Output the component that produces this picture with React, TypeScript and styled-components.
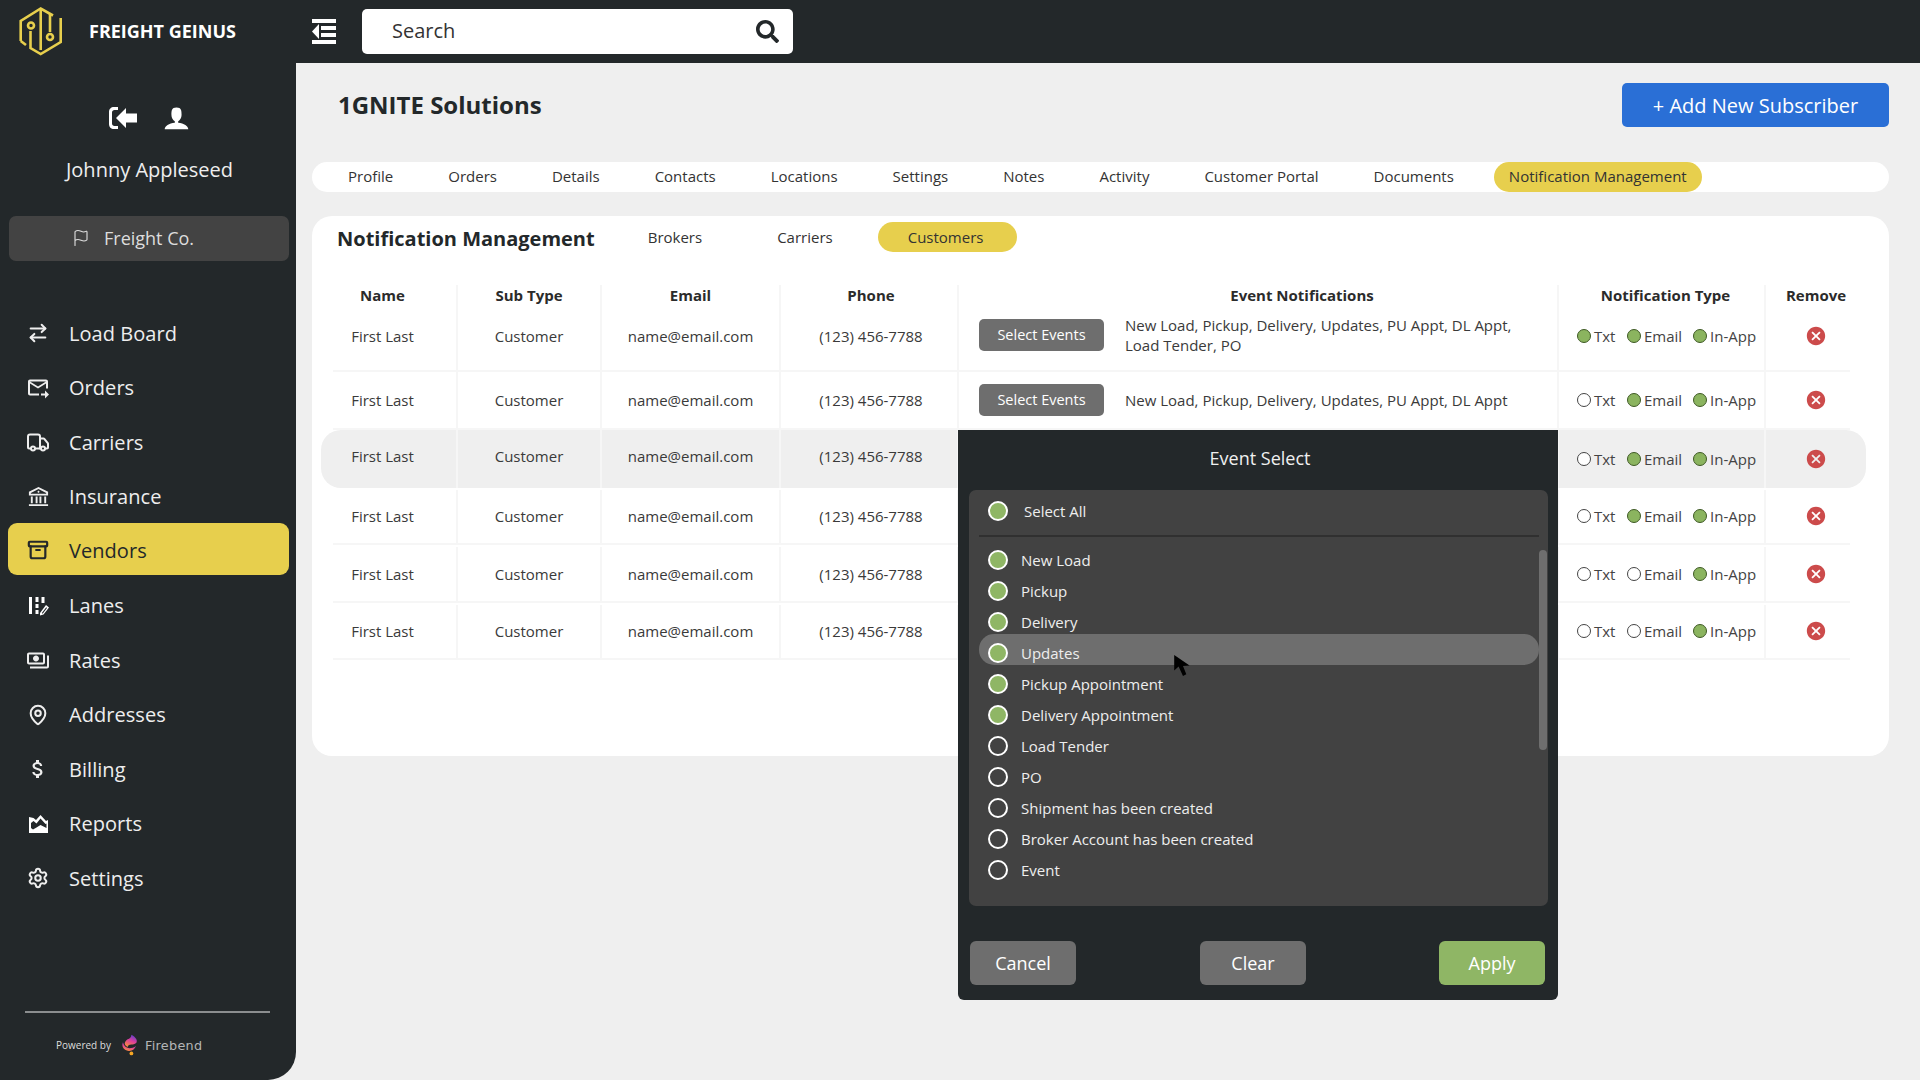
import React from 'react'
import styled, { createGlobalStyle } from 'styled-components'
import { ArrowRightLeft, Archive, Flag, MapPin, Settings } from 'lucide-react'
import { MdOutlineForwardToInbox, MdOutlinePayments, MdCancel, MdAttachMoney } from 'react-icons/md'
import { LuTruck } from 'react-icons/lu'
import { RiBankLine } from 'react-icons/ri'
import { FaSearch } from 'react-icons/fa'
import { ImUser } from 'react-icons/im'

const Global = createGlobalStyle`
  html, body { margin: 0; padding: 0; height: 100%; }
  body { font-family: "Open Sans", "Liberation Sans", sans-serif; background: #efefef; color: #333; }
  * { box-sizing: border-box; }
  #root { width: 1920px; height: 1080px; overflow: hidden; }
`

const Logo = () => (
  <svg width="46" height="52" viewBox="8 6 46 52" fill="none" stroke="#e7cf4d" strokeWidth="2.6" strokeLinejoin="miter">
    <path d="M10.7 41 V21 L30.7 8.5 L43 15.5" />
    <path d="M50.7 18 V42 L30.7 54 L20.5 48 V31" />
    <path d="M10.7 41 L16 45" />
    <path d="M30.7 8.5 V50" />
    <path d="M40 14 V32" />
    <circle cx="21" cy="25.5" r="3" />
    <circle cx="40" cy="37" r="3" />
  </svg>
)

const MenuIcon = () => (
  <svg width="24" height="25" viewBox="0 0 24 25" fill="#fff">
    <rect x="0" y="0" width="24" height="4" />
    <rect x="0" y="21" width="24" height="4" />
    <rect x="9" y="7" width="15" height="4" />
    <rect x="9" y="14" width="15" height="4" />
    <path d="M7 5 L0 12.5 L7 20 Z" />
  </svg>
)

const SignOutIcon = () => (
  <svg width="29" height="24" viewBox="0 0 29 24" fill="#fff">
    <path d="M9 1 H5 C2 1 0 3 0 6 V18 C0 21 2 23 5 23 H9 V20 H5.500 C4 20 3 19 3 17.500 V6.500 C3 5 4 4 5.500 4 H9 Z" />
    <path d="M7 12 L17 2 V7.500 H28 V16.500 H17 V22 Z" />
  </svg>
)

const LanesIcon = () => (
  <svg width="22" height="22" viewBox="0 0 22 22" fill="#fff">
    <rect x="2" y="2" width="3" height="17" />
    <rect x="8.500" y="2" width="3" height="5" />
    <rect x="8.500" y="9" width="3" height="4" />
    <rect x="8.500" y="15" width="3" height="4" />
    <path d="M13 18 L19 10 L22 12.500 L16.500 19.500 L13 20.500 Z M15 17.800 L15.200 18.700 L16 18.300 L20 13 L19.300 12.300 Z" fillRule="evenodd" />
    <rect x="14.500" y="2" width="3" height="6" />
  </svg>
)

const ReportsIcon = () => (
  <svg width="22" height="20" viewBox="0 0 22 20" fill="#fff">
    <path fillRule="evenodd" d="M2 3 V19 H21 V6 L19 7 L13.500 1 L9 6 L6.500 4 Z M4 9 L6.500 7 L9.500 9.500 L13.500 4.500 L18.500 10 L19.500 9.500 V14 L13.500 11 L9.500 13.500 L6 15.500 L4 14 Z" />
  </svg>
)

const FlameIcon = () => (
  <svg width="16" height="22" viewBox="0 0 17 22">
    <defs>
      <linearGradient id="fl" x1="0.7" y1="0" x2="0.3" y2="1">
        <stop offset="0" stopColor="#5a3fd0" />
        <stop offset="0.5" stopColor="#e0409a" />
        <stop offset="1" stopColor="#f78a3c" />
      </linearGradient>
    </defs>
    <path fill="url(#fl)" d="M10 0 C15 3 17 6 15 9 C12 12 7 9 6 13 C1 11 3 7 6 5 C8 4 10 3 10 0 Z" />
    <path fill="url(#fl)" d="M1 8 C-1 13 2 16 6 17 C10 18 13 16 15 12 C12 14 8 15 6 14 C3 13 2 11 1 8 Z" />
    <circle cx="10" cy="20" r="2" fill="#f5a623" />
  </svg>
)

const navItems = [
  { label: 'Load Board', icon: <ArrowRightLeft size={22} strokeWidth={2.2} /> },
  { label: 'Orders', icon: <MdOutlineForwardToInbox size={25} /> },
  { label: 'Carriers', icon: <LuTruck size={25} /> },
  { label: 'Insurance', icon: <RiBankLine size={23} /> },
  { label: 'Vendors', icon: <Archive size={22} strokeWidth={2.4} />, active: true },
  { label: 'Lanes', icon: <LanesIcon /> },
  { label: 'Rates', icon: <MdOutlinePayments size={25} /> },
  { label: 'Addresses', icon: <MapPin size={22} strokeWidth={2.2} /> },
  { label: 'Billing', icon: <MdAttachMoney size={24} /> },
  { label: 'Reports', icon: <ReportsIcon /> },
  { label: 'Settings', icon: <Settings size={22} strokeWidth={2.2} /> },
]

const tabs = ['Profile', 'Orders', 'Details', 'Contacts', 'Locations', 'Settings', 'Notes', 'Activity', 'Customer Portal', 'Documents', 'Notification Management']

const full = 'New Load, Pickup, Delivery, Updates, PU Appt, DL Appt'
const rows = [
  { events: [full + ',', 'Load Tender, PO'], txt: true, email: true, app: true },
  { events: [full], txt: false, email: true, app: true },
  { events: [], txt: false, email: true, app: true, open: true },
  { events: [], txt: false, email: true, app: true },
  { events: [], txt: false, email: false, app: true },
  { events: [], txt: false, email: false, app: true },
]

const eventOptions = [
  { label: 'New Load', on: true },
  { label: 'Pickup', on: true },
  { label: 'Delivery', on: true },
  { label: 'Updates', on: true, hover: true },
  { label: 'Pickup Appointment', on: true },
  { label: 'Delivery Appointment', on: true },
  { label: 'Load Tender' },
  { label: 'PO' },
  { label: 'Shipment has been created' },
  { label: 'Broker Account has been created' },
  { label: 'Event' },
]

export default function App() {
  return (
    <Page>
      <Global />
      <TopBar>
        <Brand>
          <Logo />
          <BrandName>FREIGHT GEINUS</BrandName>
        </Brand>
        <MenuButton><MenuIcon /></MenuButton>
        <SearchBox>
          <SearchLabel>Search</SearchLabel>
          <FaSearch size={23} color="#23282a" />
        </SearchBox>
      </TopBar>
      <Body>
        <Sidebar>
          <UserIcons>
            <SignOutIcon />
            <ImUser size={27} color="#fff" />
          </UserIcons>
          <UserName>Johnny Appleseed</UserName>
          <Company>
            <Flag size={18} strokeWidth={1.5} />
            <span>Freight Co.</span>
          </Company>
          <Nav>
            {navItems.map(n => (
              <NavRow key={n.label}>
                <NavItem $active={n.active}>
                  <NavIcon>{n.icon}</NavIcon>
                  <span>{n.label}</span>
                </NavItem>
              </NavRow>
            ))}
          </Nav>
          <SideFooter>
            <PoweredRow>
              <PoweredText>Powered by</PoweredText>
              <FlameIcon />
              <Firebend>Firebend</Firebend>
            </PoweredRow>
          </SideFooter>
        </Sidebar>
        <Main>
          <TitleRow>
            <Title>1GNITE Solutions</Title>
            <AddButton>+ Add New Subscriber</AddButton>
          </TitleRow>
          <TabBar>
            {tabs.map((t, i) => (
              <Tab key={t} $active={i === tabs.length - 1}>{t}</Tab>
            ))}
          </TabBar>
          <Card>
            <CardHead>
              <CardTitle>Notification Management</CardTitle>
              <SubTabs>
                <SubTab>Brokers</SubTab>
                <SubTab>Carriers</SubTab>
                <SubTab $active>Customers</SubTab>
              </SubTabs>
            </CardHead>
            <Table>
              <HeadRow>
                <HeadCell>Name</HeadCell>
                <HeadCell>Sub Type</HeadCell>
                <HeadCell>Email</HeadCell>
                <HeadCell>Phone</HeadCell>
                <HeadCell>Event Notifications</HeadCell>
                <HeadCell>Notification Type</HeadCell>
                <HeadCell>Remove</HeadCell>
              </HeadRow>
              {rows.map((r, i) => (
                <Row key={i} $tall={i === 0} $open={r.open} $low={i > 2}>
                  <Cell>First Last</Cell>
                  <Cell>Customer</Cell>
                  <Cell>name@email.com</Cell>
                  <Cell>(123) 456-7788</Cell>
                  <EventCell>
                    {r.events.length > 0 && (
                      <>
                        <SelectButton>Select Events</SelectButton>
                        <EventText>
                          {r.events.map(line => <div key={line}>{line}</div>)}
                        </EventText>
                      </>
                    )}
                  </EventCell>
                  <TypeCell>
                    <TypeOption><Dot $on={r.txt} />Txt</TypeOption>
                    <TypeOption><Dot $on={r.email} />Email</TypeOption>
                    <TypeOption><Dot $on={r.app} />In-App</TypeOption>
                  </TypeCell>
                  <RemoveCell><MdCancel size={22} color="#cc4b4b" /></RemoveCell>
                </Row>
              ))}
              <Popup>
                <PopupTitle>Event Select</PopupTitle>
                <Panel>
                  <SelectAll>
                    <Radio $on />
                    <span>Select All</span>
                  </SelectAll>
                  <OptionList>
                    {eventOptions.map(o => (
                      <OptionRow key={o.label} $hover={o.hover}>
                        <Radio $on={o.on} />
                        <span>{o.label}</span>
                      </OptionRow>
                    ))}
                  </OptionList>
                  <ScrollThumb />
                  <Cursor viewBox="0 0 16 20" fill="#000">
                    <path d="M0 0 L0 14 L4 10.500 L8 19 L11 17.500 L8 10 L14 9.500 Z" />
                  </Cursor>
                </Panel>
                <PopupButtons>
                  <PopupButton>Cancel</PopupButton>
                  <PopupButton>Clear</PopupButton>
                  <PopupButton $apply>Apply</PopupButton>
                </PopupButtons>
              </Popup>
            </Table>
          </Card>
        </Main>
      </Body>
    </Page>
  )
}

const Page = styled.div`
display:flex;
flex-direction:column;
width:1920px;
height:1080px;
`;
const TopBar = styled.header`
display:flex;
align-items:center;
height:63px;
background:#23282a;
flex-shrink:0;
`;
const Brand = styled.div`
display:flex;
align-items:center;
width:312px;
padding-left:18px;
gap:25px;
`;
const BrandName = styled.div`
padding-bottom:2px;
color:#fff;
font-size:18px;
font-weight:700;
white-space:nowrap;
`;
const MenuButton = styled.div`
display:flex;
width:50px;
`;
const SearchBox = styled.div`
display:flex;
align-items:center;
justify-content:space-between;
width:431px;
height:45px;
padding:0 14px 0 30px;
background:#fff;
border-radius:5px;
`;
const SearchLabel = styled.span`
padding-bottom:2px;
font-size:20px;
color:#333;
`;
const Body = styled.div`
display:flex;
flex:1;
min-height:0;
`;
const Sidebar = styled.aside`
display:flex;
flex-direction:column;
width:296px;
flex-shrink:0;
padding-top:42px;
background:#23282a;
border-bottom-right-radius:28px;
color:#fff;
`;
const UserIcons = styled.div`
display:flex;
align-items:center;
justify-content:center;
gap:25px;
height:25px;
padding-left:2px;
`;
const UserName = styled.div`
margin-top:26px;
height:28px;
padding-left:3px;
line-height:28px;
text-align:center;
font-size:20px;
font-weight:400;
color:#eee;
`;
const Company = styled.div`
display:flex;
align-items:center;
gap:14px;
height:45px;
margin:32px 7px 0 9px;
padding:0 0 2px 63px;
background:#434343;
border-radius:7px;
font-size:18px;
color:#ddd;
`;
const Nav = styled.nav`
display:grid;
grid-auto-rows:54.5px;
margin-top:44.75px;
`;
const NavRow = styled.div`
display:flex;
align-items:center;
`;
const NavItem = styled.div<{ $active?: boolean }>`
display:flex;
align-items:center;
width:281px;
height:52px;
margin-left:8px;
padding-left:18px;
border-radius:9px;
font-size:20px;
letter-spacing:0.05px;
background:${p => p.$active ? '#e7cf4d' : 'transparent'};
color:${p => p.$active ? '#23282a' : '#eee'};
${p => p.$active && 'margin-top:-5px; padding-top:3px;'}
`;
const NavIcon = styled.span`
display:flex;
align-items:center;
justify-content:center;
width:24px;
margin-right:19px;
`;
const SideFooter = styled.div`
margin:auto 26px 0 25px;
padding-top:21px;
border-top:2px solid #8b8e8f;
height:69px;
`;
const PoweredRow = styled.div`
display:flex;
align-items:center;
padding-left:31px;
`;
const PoweredText = styled.span`
font-size:10px;
color:#ddd;
margin-right:11px;
`;
const Firebend = styled.span`
margin-left:7px;
font-family:"DejaVu Sans", sans-serif;
font-size:12.8px;
letter-spacing:0.3px;
color:#b4b6b7;
`;
const Main = styled.main`
flex:1;
min-width:0;
padding:20px 31px 0 16px;
`;
const TitleRow = styled.div`
display:flex;
align-items:center;
justify-content:space-between;
height:44px;
padding-left:26px;
`;
const Title = styled.h1`
margin:0 0 2px;
font-size:24px;
font-weight:700;
color:#23282a;
`;
const AddButton = styled.button`
width:267px;
height:44px;
border:0;
border-radius:5px;
background:#2a6fd6;
color:#fff;
font-family:inherit;
font-size:20px;
`;
const TabBar = styled.div`
display:flex;
align-items:center;
gap:25px;
height:30px;
margin-top:35px;
padding-left:21px;
background:#fff;
border-radius:15px;
`;
const Tab = styled.div<{ $active?: boolean }>`
display:flex;
align-items:center;
height:30px;
padding:0 15px 2px;
border-radius:15px;
font-size:15px;
white-space:nowrap;
color:#333;
background:${p => p.$active ? '#e7cf4d' : 'transparent'};
`;
const Card = styled.section`
height:540px;
margin-top:23.5px;
padding:6.5px 0 0 21px;
background:#fff;
border-radius:20px;
`;
const CardHead = styled.div`
display:flex;
align-items:flex-start;
height:30px;
`;
const CardTitle = styled.h2`
margin:3px 0 0 4px;
font-size:20px;
line-height:28px;
font-weight:700;
color:#23282a;
white-space:nowrap;
`;
const SubTabs = styled.div`
display:flex;
gap:15px;
margin-left:23px;
`;
const SubTab = styled.div<{ $active?: boolean }>`
display:flex;
align-items:center;
height:30px;
padding:0 ${p => p.$active ? '34px' : '30px'} 0 30px;
border-radius:15px;
font-size:15px;
color:#333;
background:${p => p.$active ? '#e7cf4d' : 'transparent'};
`;
const Table = styled.div`
position:relative;
width:1517px;
margin-top:33px;
`;
const columns = `
display:grid;
grid-template-columns:125px 144px 179px 178px 600px 207px 83px;
& > :nth-child(1){ padding-right:24px; }
& > :nth-child(4){ padding-left:4px; }
`;
const HeadRow = styled.div`
${columns}
height:25px;
`;
const HeadCell = styled.div`
display:flex;
align-items:center;
justify-content:center;
padding-bottom:7px;
border-right:2px solid #f6f6f6;
font-size:15px;
font-weight:700;
color:#2b2b2b;
white-space:nowrap;
&:nth-child(5){ padding-left:88px; }
&:nth-child(6){ padding-left:8px; }
&:last-child{ border-right:0; padding-left:17px; }
`;
const Row = styled.div<{ $tall?: boolean; $open?: boolean; $low?: boolean }>`
${columns}
height:${p => p.$tall ? '62px' : p.$open ? '58px' : '57.5px'};
border-bottom:2px solid #f6f6f6;
${p => p.$low && 'padding-top:2px;'}
& > * { padding-bottom:${p => p.$tall ? '8px' : '0'}; }
${p => p.$tall && '& > :nth-child(5){ padding-bottom:11px; }'}
${p => p.$open && `
  margin:0 -16px 0 -12px;
  padding:0 16px 0 12px;
  background:#efefef;
  border-bottom:0;
  border-radius:20px;
  & > * { border-right-color:transparent; }
  & > :nth-child(-n+4){ padding-bottom:5px; }
`}
`;
const Cell = styled.div`
display:flex;
align-items:center;
justify-content:center;
border-right:2px solid #f6f6f6;
font-size:15px;
color:#3a3a3a;
white-space:nowrap;
`;
const EventCell = styled(Cell)`
justify-content:flex-start;
padding-left:20px;
gap:21px;
`;
const SelectButton = styled.button`
width:125px;
height:32px;
flex-shrink:0;
border:0;
border-radius:5px;
background:#6e6e6e;
color:#fff;
font-family:inherit;
font-size:14.5px;
`;
const EventText = styled.div`
font-size:15px;
line-height:20px;
color:#3a3a3a;
`;
const TypeCell = styled(Cell)`
display:grid;
grid-template-columns:50px 66px auto;
justify-content:start;
padding-left:18px;
`;
const TypeOption = styled.label`
display:flex;
align-items:center;
gap:3px;
font-size:15px;
color:#444;
`;
const Dot = styled.span<{ $on?: boolean }>`
width:14px;
height:14px;
border-radius:50%;
border:1px solid ${p => p.$on ? '#3f5a25' : '#444'};
background:${p => p.$on ? '#8bb45f' : '#fff'};
`;
const RemoveCell = styled(Cell)`
border-right:0;
padding-left:16px;
`;
const Popup = styled.div`
position:absolute;
left:625px;
top:145px;
z-index:2;
display:flex;
flex-direction:column;
width:600px;
height:570px;
background:#23282a;
border-radius:0 0 6px 6px;
`;
const PopupTitle = styled.div`
display:flex;
align-items:center;
justify-content:center;
height:56px;
margin-bottom:4px;
padding-left:4px;
font-size:18px;
color:#f0f0f0;
`;
const Panel = styled.div`
position:relative;
height:416px;
margin:0 10px 0 11px;
background:#424242;
border-radius:7px;
color:#eee;
font-size:15px;
`;
const Radio = styled.span<{ $on?: boolean }>`
width:20px;
height:20px;
flex-shrink:0;
border-radius:50%;
border:2px solid #fff;
background:${p => p.$on ? '#8fb665' : 'transparent'};
`;
const SelectAll = styled.div`
display:flex;
align-items:center;
gap:16px;
height:47px;
margin:0 9px 0 10px;
padding:0 0 3px 9px;
border-bottom:2px solid #303030;
`;
const OptionList = styled.div`
display:grid;
grid-auto-rows:31px;
margin-top:7.5px;
`;
const OptionRow = styled.div<{ $hover?: boolean }>`
position:relative;
isolation:isolate;
display:flex;
align-items:center;
gap:13px;
margin:0 9px 0 10px;
padding-left:9px;
${p => p.$hover && `
  &::before {
    content:"";
    position:absolute;
    z-index:-1;
    inset:-3.5px 0 4px 0;
    background:#6e6e6e;
    border-radius:15px;
  }
`}
`;
const ScrollThumb = styled.div`
position:absolute;
right:1px;
top:60px;
width:8px;
height:200px;
background:#6e6e6e;
border-radius:4px;
`;
const Cursor = styled.svg`
position:absolute;
left:205px;
top:165px;
width:18px;
height:22px;
`;
const PopupButtons = styled.div`
display:flex;
gap:124px;
margin-top:35px;
padding:0 13px 0 12px;
`;
const PopupButton = styled.button<{ $apply?: boolean }>`
width:106px;
height:44px;
border:0;
border-radius:6px;
font-family:inherit;
font-size:18px;
color:#fff;
background:${p => p.$apply ? '#8fb665' : '#6e6e6e'};
${p => p.$apply && 'margin-left:auto;'}
`;
